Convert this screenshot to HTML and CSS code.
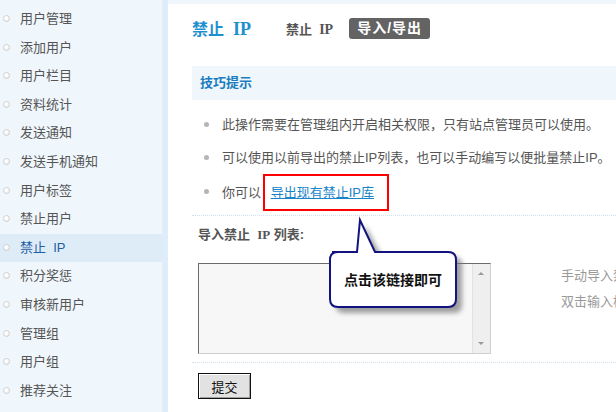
FILE: index.html
```html
<!DOCTYPE html>
<html>

<head>
	<meta charset="UTF-8">
	<meta name="viewport" content="width=device-width, initial-scale=1.0">
	<title>禁止 IP</title>
	<link rel="stylesheet" href="styles.css">
</head>

<body>
	<div class="page">
		<ul class="side">
			<li>用户管理</li>
			<li>添加用户</li>
			<li>用户栏目</li>
			<li>资料统计</li>
			<li>发送通知</li>
			<li>发送手机通知</li>
			<li>用户标签</li>
			<li>禁止用户</li>
			<li class="active">禁止&nbsp;&nbsp;IP</li>
			<li>积分奖惩</li>
			<li>审核新用户</li>
			<li>管理组</li>
			<li>用户组</li>
			<li>推荐关注</li>
		</ul>

		<div class="main">
			<div class="topline"></div>
			<div class="head">
				<h1>禁止&nbsp;&nbsp;<span class="lat">IP</span></h1>
				<span class="sub">禁止&nbsp;&nbsp;<span class="lat">IP</span></span>
				<span class="tab">导入/导出</span>
			</div>

			<div class="tips">
				<h3>技巧提示</h3>
				<ul>
					<li>此操作需要在管理组内开启相关权限，只有站点管理员可以使用。</li>
					<li>可以使用以前导出的禁止IP列表，也可以手动编写以便批量禁止IP。</li>
					<li>你可以 <span class="mark"><a href="#">导出现有禁止IP库</a></span></li>
				</ul>
			</div>

			<div class="form">
				<div class="label">导入禁止&nbsp;&nbsp;<span class="lat">IP</span> 列表:</div>
				<div class="row">
					<div class="area">
						<div class="scroll"><span class="up"></span><span class="down"></span></div>
					</div>
					<div class="hint">
						<p>手动导入禁止IP列表</p>
						<p>双击输入框可扩大</p>
					</div>
				</div>
				<div class="submit">
					<button>提交</button>
				</div>
			</div>

			<svg class="callout" width="150" height="110" viewBox="0 0 150 110">
				<defs>
					<filter id="sh" x="-20%" y="-20%" width="150%" height="150%">
						<feGaussianBlur stdDeviation="2.5" />
					</filter>
				</defs>
				<path d="M11 40 L36 40 L38 8 L55 40 L127 40 Q135 40 135 48 L135 88 Q135 96 127 96 L17 96 Q9 96 9 88 L9 48 Q9 40 17 40 Z" fill="#777" opacity="0.7" filter="url(#sh)" transform="translate(5 5)" />
				<path d="M10 40 L35 40 L38 8 L53 40 L126 40 Q134 40 134 48 L134 87 Q134 95 126 95 L16 95 Q8 95 8 87 L8 48 Q8 40 16 40 Z" fill="#fff" stroke="#13137e" stroke-width="2" />
				<text x="71" y="73" text-anchor="middle">点击该链接即可</text>
			</svg>
		</div>
	</div>
</body>

</html>
```

FILE: styles.css
```css
html {
	box-sizing: border-box;
}

*,
*:before,
*:after {
	box-sizing: inherit;
}

body,
h1,
h3,
p,
ul {
	margin: 0;
	padding: 0;
	font-weight: normal;
}

body {
	width: 616px;
	height: 412px;
	overflow: hidden;
	background: #fff;
	color: #555;
	font-family: "Liberation Sans", "Noto Sans CJK SC", sans-serif;
	font-size: 13px;
}

.page {
	display: flex;
	height: 412px;
}

.lat {
	font-family: "Liberation Serif", serif;
}

/* side menu */
.side {
	list-style: none;
	flex: 0 0 168px;
	padding-top: 5px;
	background: #f0f7fc;
	border-right: 6px solid #deedf9;
}

.side li {
	position: relative;
	height: 28.6px;
	line-height: 28.6px;
	padding-left: 20px;
	color: #555;
	white-space: nowrap;
}

.side li:before {
	content: "";
	position: absolute;
	left: 3px;
	top: 10px;
	width: 7px;
	height: 7px;
	border-radius: 50%;
	border: 1px solid #cfcfcf;
	background: radial-gradient(circle at 40% 35%, #fff 30%, #e4e4e4 100%);
}

.side li.active {
	background: #deecf8;
	color: #1d5fa3;
}

/* main */
.main {
	position: relative;
	flex: 1;
	min-width: 0;
	padding: 0 0 0 24px;
	white-space: nowrap;
}

.topline {
	height: 4px;
	margin-left: -24px;
	background: #f0f7fc;
}

.head {
	display: flex;
	align-items: center;
	height: 44px;
	padding-top: 4px;
}

.head h1 {
	font-size: 16px;
	font-weight: bold;
	color: #1e8fcf;
	margin-right: 35px;
}

.head h1 .lat {
	font-size: 18px;
}

.sub {
	font-weight: bold;
	color: #555;
	margin-right: 16px;
}

.sub .lat {
	font-size: 14px;
}

.tab {
	display: inline-block;
	height: 21px;
	line-height: 21px;
	padding: 0 8px;
	border-radius: 3px;
	background: #636363;
	color: #fff;
	font-weight: bold;
	font-size: 14px;
	letter-spacing: 1px;
}

.tips {
	margin-top: 18px;
}

.tips h3 {
	height: 34px;
	line-height: 34px;
	padding-left: 8px;
	background: #f0f7fc;
	color: #1a7dbf;
	font-size: 13px;
	font-weight: bold;
}

.tips ul {
	list-style: none;
	padding: 8px 0 8px 0;
	border-bottom: 1px dotted #d2e2ec;
}

.tips li {
	position: relative;
	height: 33px;
	line-height: 33px;
	padding-left: 30px;
	color: #555;
}

.tips li:last-child {
	line-height: 37px;
}

.tips li:before {
	content: "";
	position: absolute;
	left: 12px;
	top: 14px;
	width: 5px;
	height: 5px;
	border-radius: 50%;
	background: #b5b5b5;
}

.tips li:last-child:before {
	top: 15px;
}

.mark {
	display: inline-block;
	height: 37px;
	line-height: 33px;
	padding: 0 13px 0 6px;
	margin-left: -2px;
	border: 2px solid #f00;
	vertical-align: top;
	margin-top: 0;
}

.mark a {
	color: #1a84c9;
	text-decoration: underline;
}

/* import form */
.form {
	padding-left: 6px;
}

.label {
	height: 38px;
	line-height: 38px;
	font-weight: bold;
	color: #555;
}

.row {
	display: flex;
	padding-top: 9px;
	padding-bottom: 8px;
	border-bottom: 1px dotted #d2e2ec;
	margin-left: -6px;
	padding-left: 6px;
}

.area {
	position: relative;
	flex: 0 0 293px;
	height: 91px;
	background: #f7f7f7;
	border-top: 1px solid #6b6b6b;
	border-left: 1px solid #6b6b6b;
	border-right: 1px solid #cfcfcf;
	border-bottom: 1px solid #cfcfcf;
}

.scroll {
	position: absolute;
	right: 0;
	top: 0;
	bottom: 0;
	width: 18px;
	background: #efefef;
	border-left: 1px solid #e2e2e2;
}

.up,
.down {
	position: absolute;
	left: 5px;
	width: 0;
	height: 0;
	border-left: 3px solid transparent;
	border-right: 3px solid transparent;
}

.up {
	top: 8px;
	border-bottom: 3px solid #999;
}

.down {
	bottom: 8px;
	border-top: 3px solid #999;
}

.hint {
	margin-left: 70px;
	color: #999;
}

.hint p {
	height: 26px;
	line-height: 26px;
}

.submit {
	padding-top: 10px;
}

.submit button {
	width: 53px;
	height: 26px;
	padding: 0;
	border: 1px solid #111;
	border-radius: 0;
	background: #e2e2e2;
	box-shadow: inset 1px 1px 0 #fff, inset -1px -1px 0 #a0a0a0;
	color: #111;
	font-family: "Liberation Sans", "Noto Sans CJK SC", sans-serif;
	font-size: 13px;
}

/* the note pointing at the link */
.callout {
	position: absolute;
	left: 154px;
	top: 212px;
}

.callout text {
	font-family: "Noto Sans CJK SC", sans-serif;
	font-size: 14px;
	font-weight: bold;
	fill: #111;
}
```
